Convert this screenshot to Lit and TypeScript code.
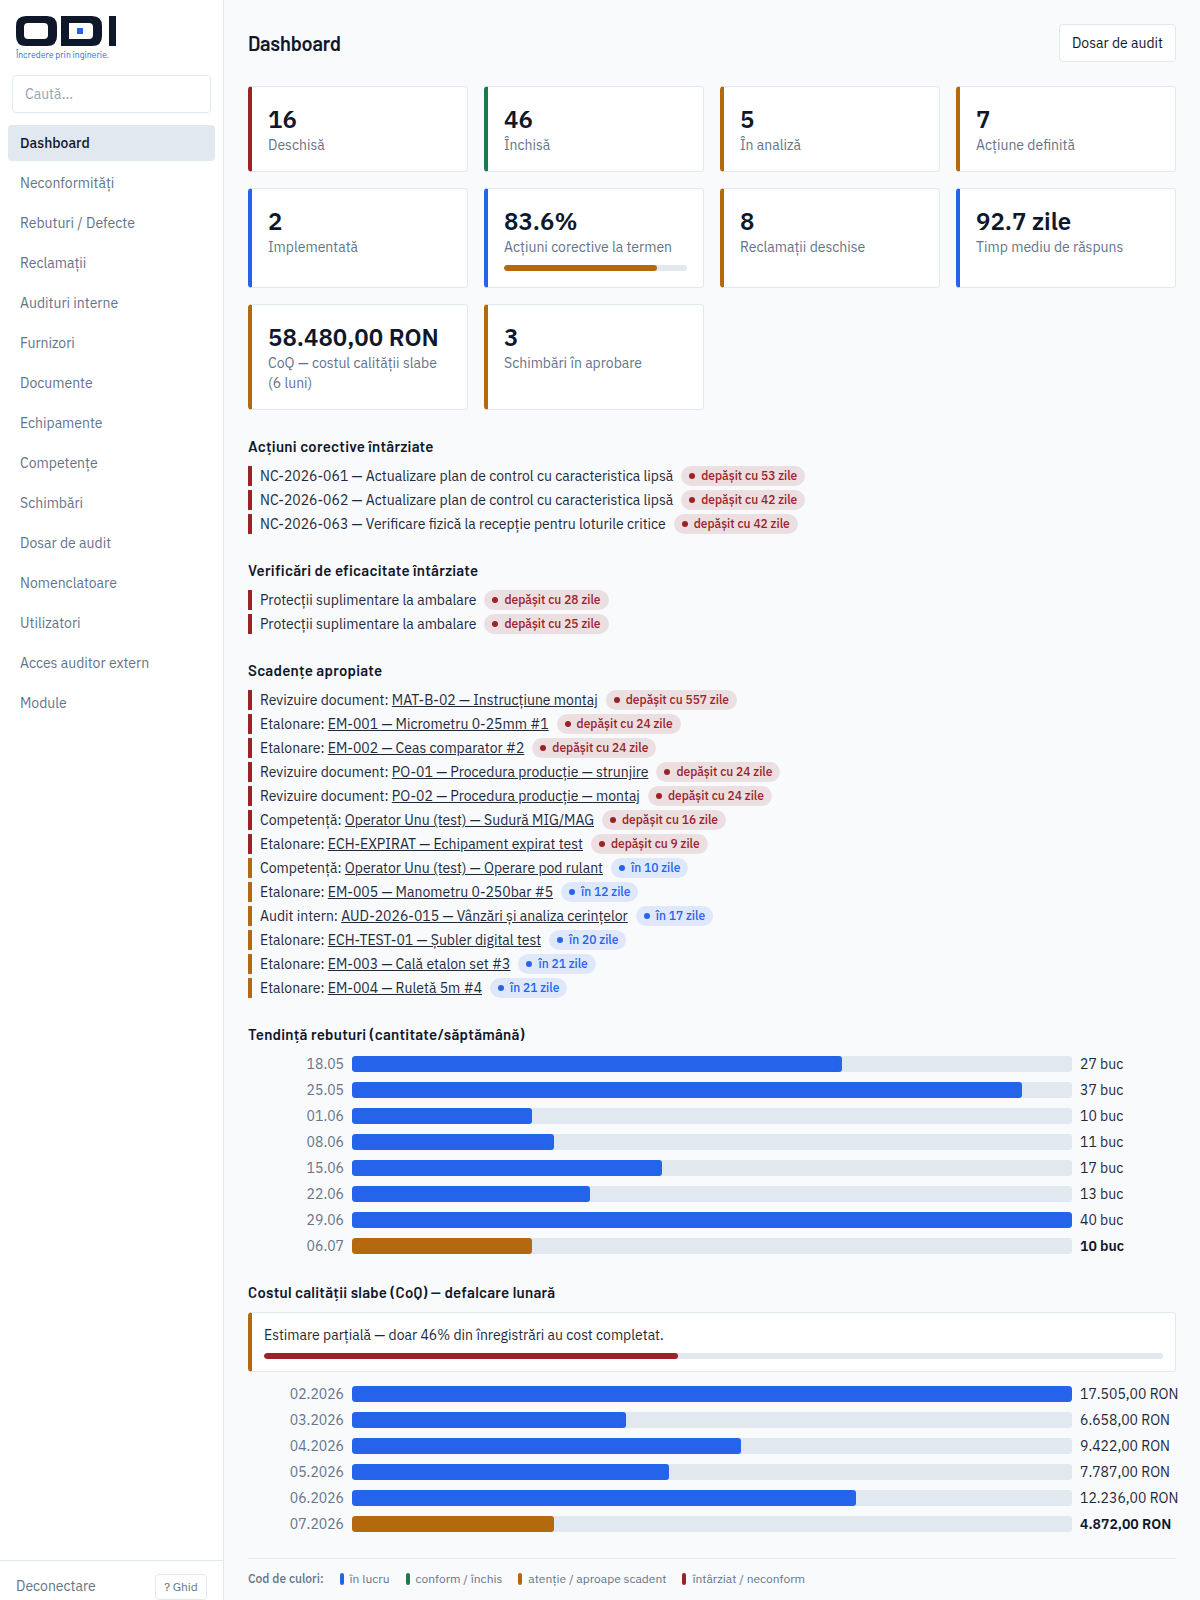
import { LitElement, html, css } from "lit";
import { customElement } from "lit/decorators.js";

type Tone = "blue" | "green" | "amber" | "red";

const NAV = ["Dashboard","Neconformități","Rebuturi / Defecte","Reclamații","Audituri interne","Furnizori","Documente","Echipamente","Competențe","Schimbări","Dosar de audit","Nomenclatoare","Utilizatori","Acces auditor extern","Module"];

const CARDS: { v: string; l: string; t: Tone; p?: number }[] = [
  { v: "16", l: "Deschisă", t: "red" },
  { v: "46", l: "Închisă", t: "green" },
  { v: "5", l: "În analiză", t: "amber" },
  { v: "7", l: "Acțiune definită", t: "amber" },
  { v: "2", l: "Implementată", t: "blue" },
  { v: "83.6%", l: "Acțiuni corective la termen", t: "blue", p: 83.6 },
  { v: "8", l: "Reclamații deschise", t: "amber" },
  { v: "92.7 zile", l: "Timp mediu de răspuns", t: "blue" },
  { v: "58.480,00 RON", l: "CoQ — costul calității slabe (6 luni)", t: "amber" },
  { v: "3", l: "Schimbări în aprobare", t: "amber" },
];

type Row = { pre: string; link?: string; t: Tone; pill: string };
const late = (pre: string, link: string | undefined, n: number): Row => ({ pre, link, t: "red", pill: `depășit cu ${n} zile` });
const soon = (pre: string, link: string, n: number): Row => ({ pre, link, t: "amber", pill: `în ${n} zile` });

const S1: Row[] = [
  late("NC-2026-061 — Actualizare plan de control cu caracteristica lipsă", undefined, 53),
  late("NC-2026-062 — Actualizare plan de control cu caracteristica lipsă", undefined, 42),
  late("NC-2026-063 — Verificare fizică la recepție pentru loturile critice", undefined, 42),
];
const S2: Row[] = [
  late("Protecții suplimentare la ambalare", undefined, 28),
  late("Protecții suplimentare la ambalare", undefined, 25),
];
const S3: Row[] = [
  late("Revizuire document: ", "MAT-B-02 — Instrucțiune montaj", 557),
  late("Etalonare: ", "EM-001 — Micrometru 0-25mm #1", 24),
  late("Etalonare: ", "EM-002 — Ceas comparator #2", 24),
  late("Revizuire document: ", "PO-01 — Procedura producție — strunjire", 24),
  late("Revizuire document: ", "PO-02 — Procedura producție — montaj", 24),
  late("Competență: ", "Operator Unu (test) — Sudură MIG/MAG", 16),
  late("Etalonare: ", "ECH-EXPIRAT — Echipament expirat test", 9),
  soon("Competență: ", "Operator Unu (test) — Operare pod rulant", 10),
  soon("Etalonare: ", "EM-005 — Manometru 0-250bar #5", 12),
  soon("Audit intern: ", "AUD-2026-015 — Vânzări și analiza cerințelor", 17),
  soon("Etalonare: ", "ECH-TEST-01 — Șubler digital test", 20),
  soon("Etalonare: ", "EM-003 — Cală etalon set #3", 21),
  soon("Etalonare: ", "EM-004 — Ruletă 5m #4", 21),
];

type Bar = { l: string; n: number; v: string };
const T1: Bar[] = [
  { l: "18.05", n: 27, v: "27 buc" }, { l: "25.05", n: 37, v: "37 buc" },
  { l: "01.06", n: 10, v: "10 buc" }, { l: "08.06", n: 11, v: "11 buc" },
  { l: "15.06", n: 17, v: "17 buc" }, { l: "22.06", n: 13, v: "13 buc" },
  { l: "29.06", n: 40, v: "40 buc" }, { l: "06.07", n: 10, v: "10 buc" },
];
const T2: Bar[] = [
  { l: "02.2026", n: 17505, v: "17.505,00 RON" }, { l: "03.2026", n: 6658, v: "6.658,00 RON" },
  { l: "04.2026", n: 9422, v: "9.422,00 RON" }, { l: "05.2026", n: 7787, v: "7.787,00 RON" },
  { l: "06.2026", n: 12236, v: "12.236,00 RON" }, { l: "07.2026", n: 4872, v: "4.872,00 RON" },
];

@customElement("app-root")
export class AppRoot extends LitElement {
  static styles = css`
    :host { display: block; font-family: "IBM Plex Sans", "Noto Sans", sans-serif; font-size: 14px; line-height: 20px; color: #1e293b; }
    * { box-sizing: border-box; }
    .shell { display: flex; height: 1600px; background: #f8fafc; }
    .side { width: 224px; flex: none; background: #fff; border-right: 1px solid #e2e8f0; display: flex; flex-direction: column; }
    .brand { padding: 16px 16px 0; height: 63px; }
    .brand svg { display: block; }
    .tag { font-family: "Barlow", sans-serif; font-size: 9px; line-height: 12px; color: #2563eb; margin-top: 3px; white-space: nowrap; }
    .search { margin: 12px; height: 38px; border: 1px solid #e2e8f0; border-radius: 4px; padding: 0 12px; display: flex; align-items: center; color: #94a3b8; background: #fff; }
    .nav { flex: 1; padding: 0 8px; display: flex; flex-direction: column; gap: 4px; }
    .nav div { height: 36px; padding: 0 12px; display: flex; align-items: center; color: #64748b; border-radius: 4px; }
    .nav div.on { background: #e2e8f0; color: #0f172a; font-weight: 500; }
    .foot { height: 40px; border-top: 1px solid #e2e8f0; padding: 0 16px; display: flex; justify-content: space-between; align-items: center; color: #64748b; }
    .ghid { height: 26px; width: 52px; margin-top: 12px; border: 1px solid #e2e8f0; border-radius: 4px; font-size: 12px; display: flex; align-items: center; justify-content: center; background: #fff; }
    .dec { margin-top: 11px; }
    .main { flex: 1; min-width: 0; padding: 24px 24px 0; }
    .top { display: flex; justify-content: space-between; align-items: center; height: 38px; margin-bottom: 24px; }
    h1 { margin: 0; font-family: "Barlow", sans-serif; font-size: 20px; line-height: 28px; font-weight: 600; letter-spacing: -0.01em; color: #0f172a; }
    .btn { height: 38px; padding: 0 12px; display: flex; align-items: center; background: #fff; border: 1px solid #e2e8f0; border-radius: 4px; color: #0f172a; }
    .cards { display: grid; grid-template-columns: repeat(4, 1fr); gap: 16px; margin-bottom: 24px; }
    .card { background: #fff; border: 1px solid #e2e8f0; border-left-width: 4px; border-radius: 4px; padding: 16px; }
    .val { font-size: 24px; line-height: 32px; font-weight: 600; color: #0f172a; }
    .lab { color: #64748b; }
    .prog { height: 6px; border-radius: 3px; background: #e2e8f0; margin-top: 8px; overflow: hidden; }
    .prog i { display: block; height: 100%; border-radius: 3px; }
    .fa { background: #b4690e; } .fr { background: #9b2226; } .fb { background: #2563eb; } .fg { background: #1e7a4d; }
    h2 { margin: 0 0 8px; font-family: "Barlow", sans-serif; font-size: 15px; line-height: 24px; font-weight: 600; letter-spacing: 0.27px; color: #0f172a; }
    section { margin-bottom: 24px; }
    .rows { display: flex; flex-direction: column; gap: 4px; }
    .row { display: flex; align-items: center; gap: 8px; height: 20px; border-left: 4px solid #9b2226; padding-left: 8px; white-space: nowrap; }
    .row a { color: inherit; text-decoration: underline; }
    .pill { height: 20px; display: inline-flex; align-items: center; gap: 6px; padding: 0 8px; border-radius: 10px; font-size: 12px; font-weight: 500; }
    .pill i { width: 6px; height: 6px; border-radius: 50%; background: currentColor; }
    .pr { background: #ecdfe2; color: #9b2226; } .pb { background: #dfe8fb; color: #2563eb; }
    .chart { display: flex; flex-direction: column; gap: 10px; padding: 2px 0; }
    .bar { display: grid; grid-template-columns: 96px 1fr 96px; grid-template-rows: 16px; gap: 8px; align-items: center; white-space: nowrap; }
    .bar .k { text-align: right; color: #64748b; }
    .track { height: 16px; background: #e2e8f0; border-radius: 3px; overflow: hidden; }
    .track i { display: block; height: 100%; border-radius: 3px; }
    .bar.last .v { font-weight: 600; color: #0f172a; }
    .note { background: #fff; border: 1px solid #e2e8f0; border-left: 4px solid #b4690e; border-radius: 4px; padding: 12px; margin-bottom: 12px; }
    .legend { border-top: 1px solid #e2e8f0; padding-top: 12px; display: flex; gap: 16px; font-size: 12px; line-height: 16px; color: #64748b; align-items: center; }
    .legend b { font-weight: 500; }
    .legend span { display: inline-flex; align-items: center; gap: 6px; }
    .legend i { width: 4px; height: 12px; border-radius: 2px; display: block; }
    .blue { border-left-color: #2563eb; } .green { border-left-color: #1e7a4d; }
    .amber { border-left-color: #b4690e; } .red { border-left-color: #9b2226; }
  `;

  private rows(list: Row[]) {
    return html`<div class="rows">${list.map(r => html`
      <div class="row ${r.t}">
        <span>${r.pre}${r.link ? html`<a>${r.link}</a>` : ""}</span>
        <span class="pill ${r.t === "red" ? "pr" : "pb"}"><i></i>${r.pill}</span>
      </div>`)}</div>`;
  }

  private bars(list: Bar[]) {
    const max = Math.max(...list.map(b => b.n));
    return html`<div class="chart">${list.map((b, i) => {
      const last = i === list.length - 1;
      return html`<div class="bar ${last ? "last" : ""}">
        <span class="k">${b.l}</span>
        <div class="track"><i class="${last ? "fa" : "fb"}" style="width:${Math.round((b.n / max) * 100)}%"></i></div>
        <span class="v">${b.v}</span>
      </div>`;
    })}</div>`;
  }

  render() {
    return html`<div class="shell">
      <aside class="side">
        <div class="brand">
          <svg width="100" height="30" viewBox="0 0 100 30" aria-label="ODI">
            <path fill="#0f172a" fill-rule="evenodd" d="M10 0H31Q41 0 41 10V20Q41 30 31 30H10Q0 30 0 20V10Q0 0 10 0ZM12 7Q8 7 8 11V19Q8 23 12 23H28Q32 23 32 19V11Q32 7 28 7Z"/>
            <path fill="#0f172a" fill-rule="evenodd" d="M45 0H76Q86 0 86 10V20Q86 30 76 30H45ZM53 7V23H73Q77 23 77 19V11Q77 7 73 7Z"/>
            <rect x="61" y="12" width="6" height="6" fill="#2563eb"/>
            <rect x="93" y="0" width="7" height="30" fill="#0f172a"/>
          </svg>
          <div class="tag">Încredere prin inginerie.</div>
        </div>
        <div class="search">Caută...</div>
        <nav class="nav">${NAV.map((n, i) => html`<div class="${i === 0 ? "on" : ""}">${n}</div>`)}</nav>
        <div class="foot"><span class="dec">Deconectare</span><span class="ghid">? Ghid</span></div>
      </aside>
      <main class="main">
        <div class="top"><h1>Dashboard</h1><div class="btn">Dosar de audit</div></div>
        <div class="cards">${CARDS.map(c => html`<div class="card ${c.t}">
          <div class="val">${c.v}</div><div class="lab">${c.l}</div>
          ${c.p ? html`<div class="prog"><i class="fa" style="width:${c.p}%"></i></div>` : ""}
        </div>`)}</div>
        <section><h2>Acțiuni corective întârziate</h2>${this.rows(S1)}</section>
        <section><h2>Verificări de eficacitate întârziate</h2>${this.rows(S2)}</section>
        <section><h2>Scadențe apropiate</h2>${this.rows(S3)}</section>
        <section><h2>Tendință rebuturi (cantitate/săptămână)</h2>${this.bars(T1)}</section>
        <section><h2>Costul calității slabe (CoQ) — defalcare lunară</h2>
          <div class="note">Estimare parțială — doar 46% din înregistrări au cost completat.
            <div class="prog"><i class="fr" style="width:46%"></i></div></div>
          ${this.bars(T2)}
        </section>
        <div class="legend"><b>Cod de culori:</b>
          <span><i class="fb"></i>în lucru</span><span><i class="fg"></i>conform / închis</span>
          <span><i class="fa"></i>atenție / aproape scadent</span><span><i class="fr"></i>întârziat / neconform</span>
        </div>
      </main>
    </div>`;
  }
}
